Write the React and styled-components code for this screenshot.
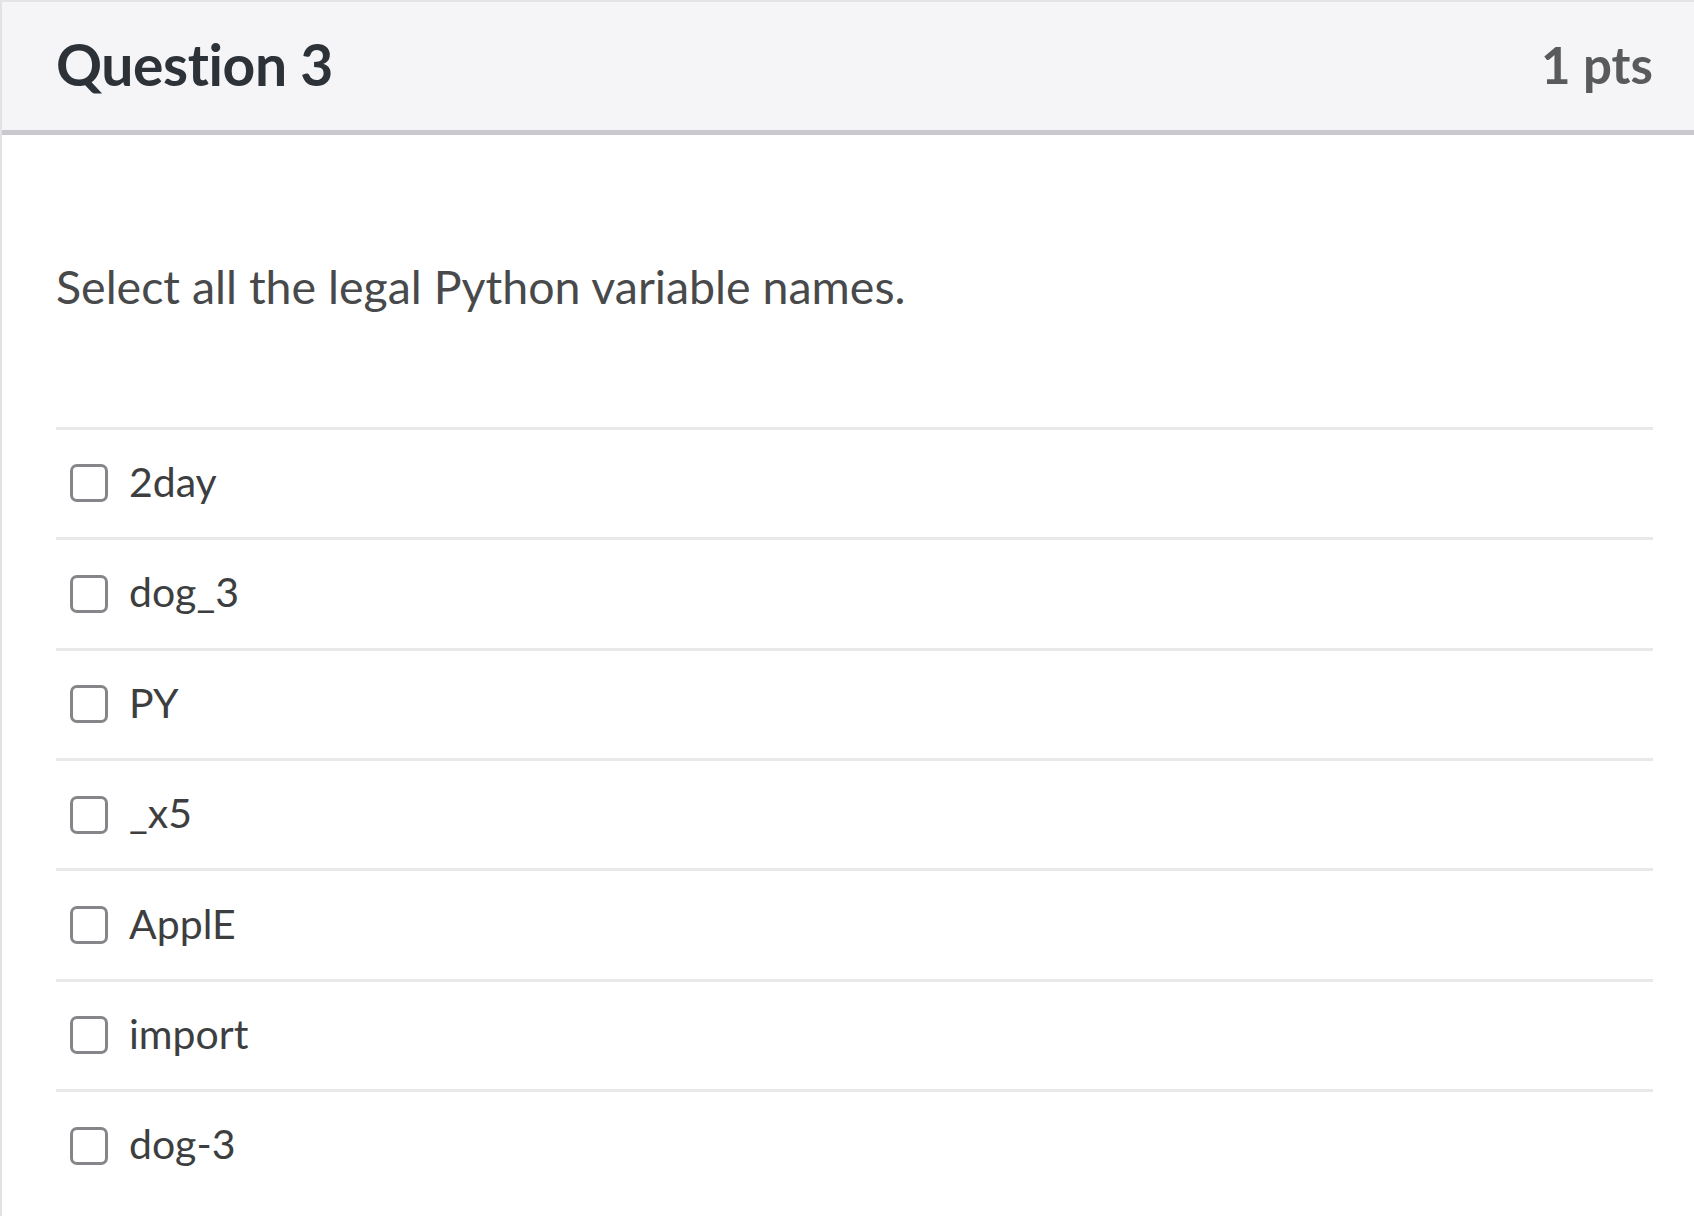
import React from "react";
import styled, { createGlobalStyle } from "styled-components";

const GlobalStyle = createGlobalStyle`
  html, body {
    margin: 0;
    padding: 0;
    background: #ffffff;
  }
  body {
    font-family: Lato, "Open Sans", "Liberation Sans", sans-serif;
  }
`;

const options = ["2day", "dog_3", "PY", "_x5", "ApplE", "import", "dog-3"];

const Card = styled.div`
  width: 1694px;
  height: 1216px;
  box-sizing: border-box;
  border-left: 2px solid #e2e2e4;
  border-top: 2px solid #e4e4e6;
  overflow: hidden;
`;

const Header = styled.div`
  height: 133px;
  box-sizing: border-box;
  display: flex;
  align-items: center;
  justify-content: space-between;
  padding: 0 41px 4px 54px;
  background: #f5f5f7;
  border-bottom: 5px solid #c9c9cd;
`;

const Title = styled.div`
  font-size: 57px;
  font-weight: 700;
  color: #2d3238;
  letter-spacing: -0.4px;
`;

const Points = styled.div`
  font-size: 51px;
  font-weight: 700;
  color: #595a5c;
`;

const Body = styled.div`
  padding: 124px 41px 0 54px;
`;

const Prompt = styled.div`
  font-size: 46.5px;
  line-height: 1.2;
  color: #48494b;
  margin-bottom: 112px;
`;

const OptionList = styled.div`
  display: flex;
  flex-direction: column;
`;

const Option = styled.label`
  height: 110.4px;
  box-sizing: border-box;
  display: flex;
  align-items: center;
  gap: 21px;
  padding-left: 14px;
  border-top: 3px solid #e9e9eb;
`;

const Box = styled.span`
  width: 38px;
  height: 38px;
  box-sizing: border-box;
  border: 3px solid #86868a;
  border-radius: 7px;
  background: #ffffff;
  flex-shrink: 0;
`;

const OptionText = styled.span`
  font-size: 41px;
  color: #3d3e40;
  line-height: 1;
  margin-top: -4px;
`;

export default function App() {
  return (
    <>
      <GlobalStyle />
      <Card>
        <Header>
          <Title>Question 3</Title>
          <Points>1 pts</Points>
        </Header>
        <Body>
          <Prompt>Select all the legal Python variable names.</Prompt>
          <OptionList>
            {options.map((o) => (
              <Option key={o}>
                <Box />
                <OptionText>{o}</OptionText>
              </Option>
            ))}
          </OptionList>
        </Body>
      </Card>
    </>
  );
}
